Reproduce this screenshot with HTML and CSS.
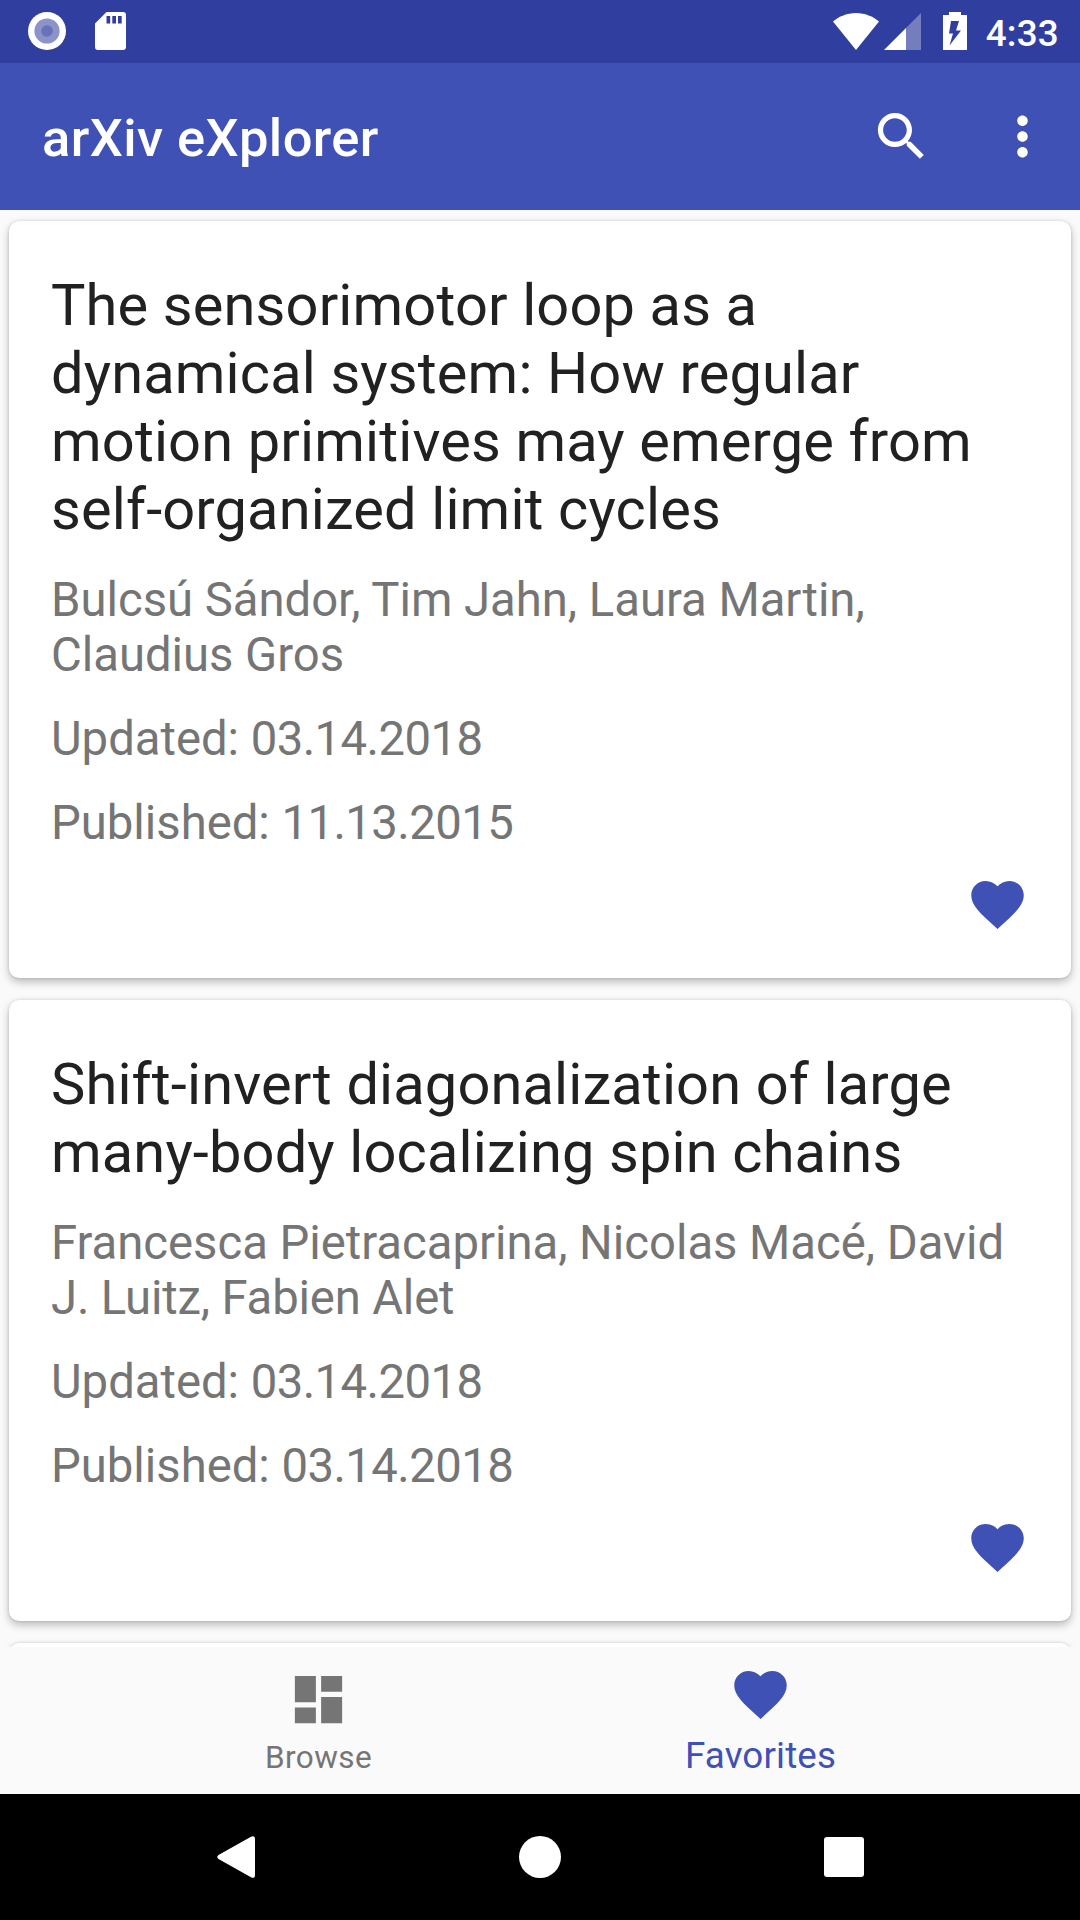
FILE: index.html
```html
<!DOCTYPE html>
<html lang="en">
<head>
<meta charset="utf-8">
<title>arXiv eXplorer</title>
<link rel="stylesheet" href="styles.css">
</head>
<body>
<div class="screen">
  <header class="status-bar">
    <div class="status-left">
      <svg class="record" viewBox="0 0 38 38"><circle cx="19" cy="19" r="19" fill="#fff"/><circle cx="19" cy="19" r="12.6" fill="#8c93ca"/><circle cx="19" cy="19" r="5.8" fill="#6971b8"/></svg>
      <svg class="sd-card" viewBox="0 0 31 38"><path fill="#fff" fill-rule="evenodd" d="M11.5 0H28a3 3 0 0 1 3 3v32a3 3 0 0 1-3 3H3a3 3 0 0 1-3-3V11.5zM11.5 4v7.5h3.7V4zM17.3 4v7.5H21V4zM23 4v7.5h3.7V4z"/></svg>
    </div>
    <div class="status-right">
      <svg class="wifi" viewBox="0 0 46 37"><path fill="#fff" d="M0 8.500C6 3.500 14 0 23 0s17 3.500 23 8.500L23 37z"/></svg>
      <svg class="signal" viewBox="0 0 37 37"><path fill="#fff" fill-opacity=".33" d="M37 0v37H22V15z"/><path fill="#fff" d="M22 15v22H0z"/></svg>
      <svg class="battery" viewBox="0 0 24 38"><path fill="#fff" fill-rule="evenodd" d="M6 0h12v3h6v35H0V3h6zM8 9 6 21.500h4L6.500 33.500 18 18.500h-5L16 9z"/></svg>
      <span class="clock">4:33</span>
    </div>
  </header>

  <div class="toolbar">
    <h1 class="app-title">arXiv eXplorer</h1>
    <div class="actions">
      <svg class="icon" viewBox="0 0 24 24"><path d="M15.500 14h-.79l-.28-.27C15.410 12.590 16 11.110 16 9.500 16 5.910 13.090 3 9.500 3S3 5.910 3 9.500 5.910 16 9.500 16c1.610 0 3.090-.59 4.230-1.570l.27.28v.79l5 4.990L20.490 19l-4.990-5zm-6 0C7.010 14 5 11.990 5 9.500S7.010 5 9.500 5 14 7.010 14 9.500 11.990 14 9.500 14z"/></svg>
      <svg class="icon" viewBox="0 0 24 24"><path d="M12 8c1.100 0 2-.9 2-2s-.9-2-2-2-2 .9-2 2 .9 2 2 2zm0 2c-1.100 0-2 .9-2 2s.9 2 2 2 2-.9 2-2-.9-2-2-2zm0 6c-1.100 0-2 .9-2 2s.9 2 2 2 2-.9 2-2-.9-2-2-2z"/></svg>
    </div>
  </div>

  <main class="list">
    <article class="card">
      <h2 class="title">The sensorimotor loop as a<br>dynamical system: How regular<br>motion primitives may emerge from<br>self-organized limit cycles</h2>
      <p class="meta">Bulcsú Sándor, Tim Jahn, Laura Martin,<br>Claudius Gros</p>
      <p class="meta">Updated: <span class="date">03.14.2018</span></p>
      <p class="meta">Published: <span class="date">11.13.2015</span></p>
      <svg class="icon favorite" viewBox="0 0 24 24"><path d="M12 21.350l-1.450-1.320C5.400 15.360 2 12.280 2 8.500 2 5.420 4.420 3 7.500 3c1.740 0 3.410.81 4.500 2.090C13.090 3.810 14.760 3 16.500 3 19.580 3 22 5.420 22 8.500c0 3.780-3.400 6.860-8.550 11.540L12 21.350z"/></svg>
    </article>
    <article class="card">
      <h2 class="title">Shift-invert diagonalization of large<br>many-body localizing spin chains</h2>
      <p class="meta">Francesca Pietracaprina, Nicolas Macé, David<br><span class="snug">J. Luitz, Fabien Alet</span></p>
      <p class="meta">Updated: <span class="date">03.14.2018</span></p>
      <p class="meta">Published: <span class="date">03.14.2018</span></p>
      <svg class="icon favorite" viewBox="0 0 24 24"><path d="M12 21.350l-1.450-1.320C5.400 15.360 2 12.280 2 8.500 2 5.420 4.420 3 7.500 3c1.740 0 3.410.81 4.500 2.090C13.090 3.810 14.760 3 16.500 3 19.580 3 22 5.420 22 8.500c0 3.780-3.400 6.860-8.550 11.540L12 21.350z"/></svg>
    </article>
    <article class="card"></article>
  </main>

  <nav class="tabs">
    <div class="tab">
      <svg class="icon" viewBox="0 0 24 24"><path d="M3 13h8V3H3v10zm0 8h8v-6H3v6zm10 0h8V11h-8v10zm0-18v6h8V3h-8z"/></svg>
      <span class="tab-label">Browse</span>
    </div>
    <div class="tab active">
      <svg class="icon" viewBox="0 0 24 24"><path d="M12 21.350l-1.450-1.320C5.400 15.360 2 12.280 2 8.500 2 5.420 4.420 3 7.500 3c1.740 0 3.410.81 4.500 2.090C13.090 3.810 14.760 3 16.500 3 19.580 3 22 5.420 22 8.500c0 3.780-3.400 6.860-8.550 11.540L12 21.350z"/></svg>
      <span class="tab-label">Favorites</span>
    </div>
  </nav>

  <footer class="system-nav">
    <svg class="back" viewBox="0 0 38 42"><path fill="#fff" d="M1.500 19 34 .7Q38-1 38 3v36q0 4-4 2.300L1.500 23Q-1 21 1.500 19z"/></svg>
    <span class="home"></span>
    <span class="recent"></span>
  </footer>
</div>
</body>
</html>
```
FILE: styles.css
```css
* { box-sizing: border-box; }
body { margin: 0; font-family: Roboto, sans-serif; }
svg { display: block; flex: none; }

.screen {
  width: 1080px;
  height: 1920px;
  display: flex;
  flex-direction: column;
  overflow: hidden;
  background: #fafafa;
}

.status-bar {
  height: 63px;
  flex: none;
  display: flex;
  justify-content: space-between;
  background: #303f9f;
  padding: 12px 21px 0 28px;
}
.status-left, .status-right { display: flex; align-items: flex-start; }
.record { width: 38px; height: 38px; }
.sd-card { width: 31px; height: 38px; margin-left: 29px; }
.wifi { width: 46px; height: 37px; margin-top: 1px; }
.signal { width: 37px; height: 37px; margin: 1px 22px 0 5px; }
.battery { width: 24px; height: 38px; }
.clock {
  margin-left: 19px;
  font-size: 36.75px;
  font-weight: 500;
  line-height: 44px;
  letter-spacing: .25px;
  color: #fff;
}

.toolbar {
  height: 147px;
  flex: none;
  display: flex;
  align-items: center;
  justify-content: space-between;
  padding: 0 26px 0 42px;
  background: #3f51b5;
  color: #fff;
}
.app-title {
  margin: 0;
  padding-top: 2px;
  font-size: 52.5px;
  font-weight: 500;
  line-height: 62px;
  letter-spacing: .4px;
}
.actions { display: flex; gap: 58px; }
.icon { width: 63px; height: 63px; fill: currentColor; }

.list {
  flex: 1;
  min-height: 0;
  overflow: hidden;
  padding: 11px 9px 0;
  display: flex;
  flex-direction: column;
  gap: 22px;
}
.card {
  flex: none;
  display: flex;
  flex-direction: column;
  gap: 29px;
  min-height: 200px;
  padding: 50px 42px 42px;
  border-radius: 10px;
  background: #fff;
  box-shadow: 0 4px 8px rgba(0, 0, 0, .25), 0 0 3px rgba(0, 0, 0, .14);
}
.title {
  margin: 0 0 1px;
  font-size: 57.75px;
  font-weight: 400;
  line-height: 68px;
  letter-spacing: .15px;
  color: #212121;
  white-space: nowrap;
}
.meta {
  margin: 0;
  font-size: 47.25px;
  line-height: 55px;
  letter-spacing: -.02px;
  color: #757575;
  white-space: nowrap;
}
.date { letter-spacing: -.55px; }
.snug { letter-spacing: -.17px; }
.favorite { align-self: flex-end; margin-top: -7px; color: #3f51b5; }

.tabs {
  height: 147px;
  flex: none;
  display: flex;
  justify-content: center;
  background: #fafafa;
}
.tab {
  width: 441px;
  display: flex;
  flex-direction: column;
  align-items: center;
  padding: 21px 2px 0 0;
  color: #757575;
}
.tab-label { margin-top: 8px; font-size: 31.5px; line-height: 37px; letter-spacing: .4px; }
.active { padding: 16px 0 0; color: #3f51b5; }
.active .tab-label { font-size: 36.75px; line-height: 43px; letter-spacing: .15px; }

.system-nav {
  height: 126px;
  flex: none;
  display: flex;
  align-items: center;
  justify-content: space-between;
  padding: 0 216px 0 217px;
  background: #000;
}
.back { width: 38px; height: 42px; }
.home { width: 42px; height: 42px; border-radius: 50%; background: #fff; }
.recent { width: 40px; height: 40px; border-radius: 3px; background: #fff; }
```
